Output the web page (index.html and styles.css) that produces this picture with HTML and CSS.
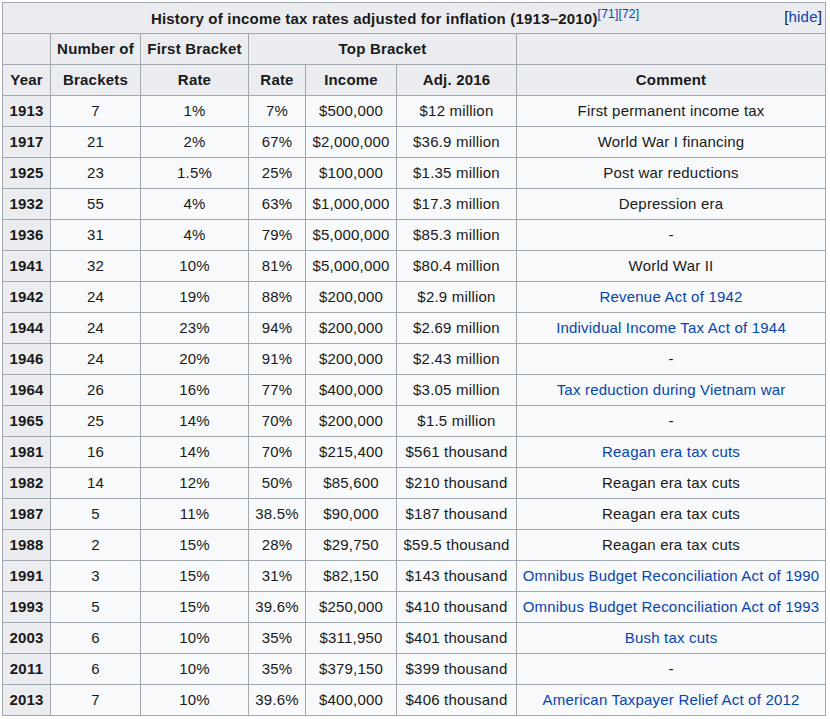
FILE: index.html
```html
<!DOCTYPE html>
<html lang="en">
<head>
<meta charset="utf-8">
<title>History of income tax rates</title>
<link rel="stylesheet" href="styles.css">
</head>
<body>
<table class="wikitable">
  <colgroup>
    <col class="c-year">
    <col class="c-num">
    <col class="c-first">
    <col class="c-rate">
    <col class="c-income">
    <col class="c-adj">
    <col class="c-comment">
  </colgroup>
  <thead>
    <tr>
      <th colspan="7" class="title-cell">
        <span class="toggle">[<a href="#">hide</a>]</span>
        History of income tax rates adjusted for inflation (1913–2010)<sup class="ref"><a href="#">[71]</a><a href="#">[72]</a></sup>
      </th>
    </tr>
    <tr>
      <th></th>
      <th>Number of</th>
      <th>First Bracket</th>
      <th colspan="3">Top Bracket</th>
      <th></th>
    </tr>
    <tr>
      <th>Year</th>
      <th>Brackets</th>
      <th>Rate</th>
      <th>Rate</th>
      <th>Income</th>
      <th>Adj. 2016</th>
      <th>Comment</th>
    </tr>
  </thead>
  <tbody>
    <tr><th>1913</th><td>7</td><td>1%</td><td>7%</td><td>$500,000</td><td>$12 million</td><td>First permanent income tax</td></tr>
    <tr><th>1917</th><td>21</td><td>2%</td><td>67%</td><td>$2,000,000</td><td>$36.9 million</td><td>World War I financing</td></tr>
    <tr><th>1925</th><td>23</td><td>1.5%</td><td>25%</td><td>$100,000</td><td>$1.35 million</td><td>Post war reductions</td></tr>
    <tr><th>1932</th><td>55</td><td>4%</td><td>63%</td><td>$1,000,000</td><td>$17.3 million</td><td>Depression era</td></tr>
    <tr><th>1936</th><td>31</td><td>4%</td><td>79%</td><td>$5,000,000</td><td>$85.3 million</td><td>-</td></tr>
    <tr><th>1941</th><td>32</td><td>10%</td><td>81%</td><td>$5,000,000</td><td>$80.4 million</td><td>World War II</td></tr>
    <tr><th>1942</th><td>24</td><td>19%</td><td>88%</td><td>$200,000</td><td>$2.9 million</td><td><a href="#">Revenue Act of 1942</a></td></tr>
    <tr><th>1944</th><td>24</td><td>23%</td><td>94%</td><td>$200,000</td><td>$2.69 million</td><td><a href="#">Individual Income Tax Act of 1944</a></td></tr>
    <tr><th>1946</th><td>24</td><td>20%</td><td>91%</td><td>$200,000</td><td>$2.43 million</td><td>-</td></tr>
    <tr><th>1964</th><td>26</td><td>16%</td><td>77%</td><td>$400,000</td><td>$3.05 million</td><td><a href="#">Tax reduction during Vietnam war</a></td></tr>
    <tr><th>1965</th><td>25</td><td>14%</td><td>70%</td><td>$200,000</td><td>$1.5 million</td><td>-</td></tr>
    <tr><th>1981</th><td>16</td><td>14%</td><td>70%</td><td>$215,400</td><td>$561 thousand</td><td><a href="#">Reagan era tax cuts</a></td></tr>
    <tr><th>1982</th><td>14</td><td>12%</td><td>50%</td><td>$85,600</td><td>$210 thousand</td><td>Reagan era tax cuts</td></tr>
    <tr><th>1987</th><td>5</td><td>11%</td><td>38.5%</td><td>$90,000</td><td>$187 thousand</td><td>Reagan era tax cuts</td></tr>
    <tr><th>1988</th><td>2</td><td>15%</td><td>28%</td><td>$29,750</td><td>$59.5 thousand</td><td>Reagan era tax cuts</td></tr>
    <tr><th>1991</th><td>3</td><td>15%</td><td>31%</td><td>$82,150</td><td>$143 thousand</td><td><a href="#">Omnibus Budget Reconciliation Act of 1990</a></td></tr>
    <tr><th>1993</th><td>5</td><td>15%</td><td>39.6%</td><td>$250,000</td><td>$410 thousand</td><td><a href="#">Omnibus Budget Reconciliation Act of 1993</a></td></tr>
    <tr><th>2003</th><td>6</td><td>10%</td><td>35%</td><td>$311,950</td><td>$401 thousand</td><td><a href="#">Bush tax cuts</a></td></tr>
    <tr><th>2011</th><td>6</td><td>10%</td><td>35%</td><td>$379,150</td><td>$399 thousand</td><td>-</td></tr>
    <tr><th>2013</th><td>7</td><td>10%</td><td>39.6%</td><td>$400,000</td><td>$406 thousand</td><td><a href="#">American Taxpayer Relief Act of 2012</a></td></tr>
  </tbody>
</table>
</body>
</html>
```
FILE: styles.css
```css
html, body {
  margin: 0;
  padding: 0;
  background: #ffffff;
}

body {
  font-family: "Liberation Sans", Arial, sans-serif;
  font-size: 15px;
  letter-spacing: 0.2px;
  color: #1a1a1a;
}

a {
  color: #0645ad;
  text-decoration: none;
}

.wikitable {
  margin: 2px 0 0 2px;
  width: 823px;
  table-layout: fixed;
  border-collapse: collapse;
  background: #f8f9fa;
  border: 1px solid #a2a9b1;
}

.c-year { width: 48px; }
.c-num { width: 90px; }
.c-first { width: 108px; }
.c-rate { width: 57px; }
.c-income { width: 91px; }
.c-adj { width: 120px; }
.c-comment { width: 309px; }

.wikitable tr {
  height: 31px;
}

.wikitable th,
.wikitable td {
  border: 1px solid #a2a9b1;
  padding: 0 3px;
  text-align: center;
  vertical-align: middle;
  white-space: nowrap;
  line-height: 18px;
}

.wikitable th {
  background: #eaecf0;
  font-weight: bold;
}

.wikitable td {
  background: #f8f9fa;
}

.title-cell {
  padding-left: 4px;
  padding-right: 4px;
}

.toggle {
  float: right;
  font-weight: normal;
  margin-right: 0;
}

.ref {
  font-weight: normal;
  font-size: 12px;
  line-height: 1;
  vertical-align: 6px;
}
```
